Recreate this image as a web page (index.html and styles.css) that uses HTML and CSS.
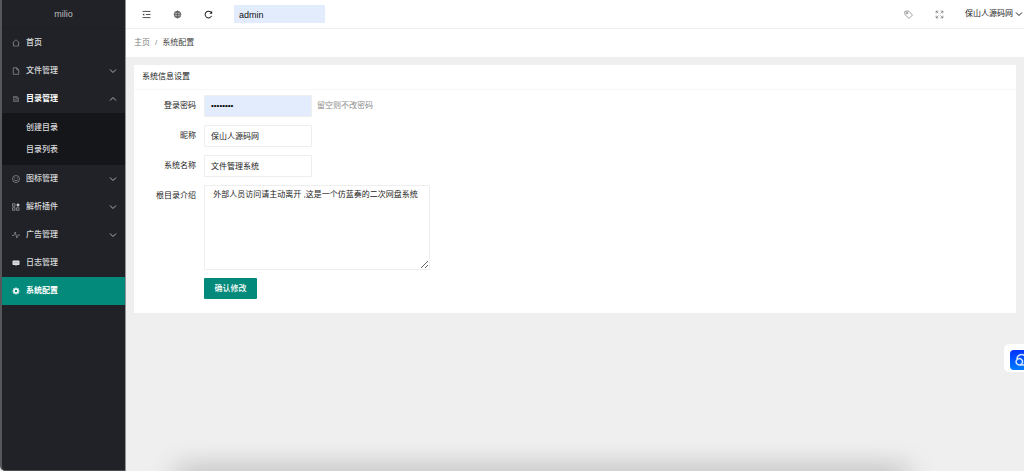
FILE: index.html
```html
<!DOCTYPE html>
<html lang="zh-CN">
<head>
<meta charset="utf-8">
<meta name="viewport" content="width=device-width, initial-scale=1">
<title>系统配置</title>
<link rel="stylesheet" href="styles.css">
</head>
<body>
<div class="app">
  <aside class="sidebar">
    <div class="brand">milio</div>
    <nav class="menu">
      <a class="item" href="#"><svg class="icon dim" viewBox="0 0 16 16"><path d="M1 8 8 1.500 15 8M3 7v7h10V7"/></svg><span>首页</span></a>
      <a class="item" href="#"><svg class="icon dim" viewBox="0 0 16 16"><path d="M2.500 1.500h7l4 4v9h-11zM9.500 1.500v4h4"/></svg><span>文件管理</span><svg class="chevron" viewBox="0 0 8 8"><path d="m1 2.500 3 3 3-3"/></svg></a>
      <a class="item open" href="#"><svg class="icon dark" viewBox="0 0 16 16"><path class="solid" d="M2 2h8l4 4v8H2z"/><path class="cut" d="M4 7h5M4 10h8"/></svg><span>目录管理</span><svg class="chevron" viewBox="0 0 8 8"><path d="m1 5.500 3-3 3 3"/></svg></a>
      <div class="submenu">
        <a class="subitem" href="#">创建目录</a>
        <a class="subitem" href="#">目录列表</a>
      </div>
      <a class="item" href="#"><svg class="icon dim" viewBox="0 0 16 16"><circle cx="8" cy="8" r="7"/><path d="M4.500 6h2M9.500 6h2M4.500 9.500q3.500 4 7 0"/></svg><span>图标管理</span><svg class="chevron" viewBox="0 0 8 8"><path d="m1 2.500 3 3 3-3"/></svg></a>
      <a class="item" href="#"><svg class="icon" viewBox="0 0 16 16"><path d="M1 1.500h5v5H1zM1 9.500h5v5H1zM9 9.500h5v5H9z"/><path class="solid bright" d="m12 0 1.500 2.500L16 4l-2.500 1.500L12 8l-1.500-2.500L8 4l2.500-1.500z"/></svg><span>解析插件</span><svg class="chevron" viewBox="0 0 8 8"><path d="m1 2.500 3 3 3-3"/></svg></a>
      <a class="item" href="#"><svg class="icon dim" viewBox="0 0 16 16"><path d="M0 9h3.500l3-7 3 12 2.500-6h4"/></svg><span>广告管理</span><svg class="chevron" viewBox="0 0 8 8"><path d="m1 2.500 3 3 3-3"/></svg></a>
      <a class="item" href="#"><svg class="icon bright" viewBox="0 0 16 16"><path class="solid" d="M2 3h12l1 1v7l-1 1H9.500L8 14l-1.500-2H2l-1-1V4z"/><path class="cut faint" d="M4 7.500h2M7 7.500h2M10 7.500h2"/></svg><span>日志管理</span></a>
      <a class="item active" href="#" aria-current="page"><svg class="icon" viewBox="0 0 16 16"><circle cx="8" cy="8" r="4" stroke-width="3"/><path stroke-width="2.500" d="M8 1v2M8 13v2M1 8h2M13 8h2M3 3l1.500 1.500M11.500 11.500 13 13M13 3l-1.500 1.500M4.500 11.500 3 13"/></svg><span>系统配置</span></a>
    </nav>
  </aside>
  <div class="main">
    <header class="topbar">
      <button class="tool" type="button" aria-label="折叠菜单"><svg class="glyph" viewBox="0 0 16 16"><path d="M1 2.500h14M7 8h8M1 13.500h14"/><path class="solid" d="M1 8l3-2v4z"/></svg></button>
      <button class="tool" type="button" aria-label="网站"><svg class="glyph globe" viewBox="0 0 16 16"><circle cx="8" cy="8" r="6"/><ellipse cx="8" cy="8" rx="3" ry="6"/><path d="M2 8h12M3 5h10M3 11h10M8 2v12"/></svg></button>
      <button class="tool" type="button" aria-label="刷新"><svg class="glyph refresh" viewBox="0 0 16 16"><path d="M13.500 10.500A6 6 0 1 1 12.500 4"/><path class="solid" d="M14.500 1.500v5h-5z"/></svg></button>
      <input class="search" type="text" value="admin" aria-label="搜索" autofocus>
      <div class="account">
        <button class="tool" type="button" aria-label="标签"><svg class="glyph thin" viewBox="0 0 16 16"><path d="M1.500 2.500 8 1.500l7 7.500-6 6-7.500-7z"/><circle cx="5.500" cy="5.500" r="1.500"/></svg></button>
        <button class="tool" type="button" aria-label="全屏"><svg class="glyph thin" viewBox="0 0 16 16"><path d="M2 6V2h4M2 2l4 4M10 2h4v4M14 2l-4 4M2 10v4h4M2 14l4-4M14 10v4h-4M14 14l-4-4"/></svg></button>
        <button class="user" type="button">保山人源码网<svg class="chevron" viewBox="0 0 8 8"><path d="m1 2.500 3 3 3-3"/></svg></button>
      </div>
    </header>
    <nav class="crumbs" aria-label="面包屑"><a href="#">主页</a><span class="slash">/</span><span class="here">系统配置</span></nav>
    <main class="content">
      <section class="card">
        <h1 class="title">系统信息设置</h1>
        <form class="form">
          <label for="password">登录密码</label>
          <div class="field"><input class="box filled" id="password" type="password" value="12345678"><span class="hint">留空则不改密码</span></div>
          <label for="nickname">昵称</label>
          <div class="field"><input class="box" id="nickname" type="text" value="保山人源码网"></div>
          <label for="sysname">系统名称</label>
          <div class="field"><input class="box" id="sysname" type="text" value="文件管理系统"></div>
          <label for="intro">根目录介绍</label>
          <div class="field"><textarea class="box area" id="intro"> 外部人员访问请主动离开 ,这是一个仿蓝奏的二次网盘系统</textarea></div>
          <button class="submit" type="button">确认修改</button>
        </form>
      </section>
    </main>
  </div>
</div>
<button class="floater" type="button" aria-label="云助手"><span class="cloud"><svg viewBox="0 0 20 20"><path d="M17 15H9a3.200 3.200 0 1 1 2.500-5.500c2 2 1 4.500-1.500 5.500M7 9a4.500 4.500 0 0 1 8.500-2"/></svg></span></button>
<div class="shade"></div>
</body>
</html>
```
FILE: styles.css
```css
* { box-sizing: border-box; }

body {
  margin: 0;
  overflow: hidden;
  background: #efefef;
  color: #222;
  font: 8px/12px "Liberation Sans", "Noto Sans CJK SC", sans-serif;
}

a { color: inherit; text-decoration: none; }
button, input, textarea { font: inherit; color: inherit; }
button { border: 0; padding: 0; background: none; cursor: pointer; }

svg {
  flex: none;
  fill: none;
  stroke: currentColor;
  stroke-width: 1.4;
}
.solid { fill: currentColor; stroke: none; }
.cut { stroke: #202227; }
.cut.faint { stroke: #77797c; }

.app { display: flex; min-height: 100vh; }

.sidebar {
  flex: 0 0 126px;
  border-left: 2px solid #55575a;
  border-right: 1px solid #939496;
  border-bottom: 1px solid #4b4c50;
  border-bottom-left-radius: 5px;
  background: #202227;
  color: #d8d9da;
}
.brand {
  height: 29px;
  border-bottom: 1px solid #1d1f23;
  color: #bcbdbe;
  font-size: 9px;
  line-height: 29px;
  text-align: center;
}
.item {
  display: flex;
  align-items: center;
  gap: 6px;
  height: 28px;
  padding: 0 8px 0 10px;
  font-weight: 500;
}
.icon { width: 8px; height: 8px; color: #a6a7a9; }
.icon.dim { color: #96989b; }
.icon.dark { color: #5b5d61; }
.bright, .icon.bright { color: #dcddde; }
.chevron { width: 8px; height: 8px; margin-left: auto; stroke-width: 1; }
.item .chevron { color: #b0b1b3; }
.item.open { color: #fff; font-weight: 700; }
.item.active { background: #038a7a; color: #fff; font-weight: 700; }
.item.active .icon { color: #fff; }
.submenu { padding: 4px 0; background: #15161a; }
.subitem { display: block; padding-left: 24px; line-height: 22px; font-weight: 500; }

.main { flex: 1; min-width: 0; }

.topbar {
  display: flex;
  align-items: center;
  height: 29px;
  padding: 0 1px 0 5px;
  border-bottom: 1px solid #ededed;
  background: #fff;
}
.tool { display: grid; place-items: center; width: 31px; height: 28px; }
.glyph { width: 9px; height: 9px; }
.globe { color: #555; }
.refresh { stroke-width: 1.8; }
.thin { color: #555; stroke-width: 1; }
.search {
  width: 91px;
  height: 18px;
  margin-left: 10px;
  padding: 1px 5px 0;
  border: 0;
  background: #e3ecfd;
  color: #111;
  font-size: 9px;
  outline: 0;
}
.account { display: flex; align-items: center; margin-left: auto; }
.user { display: flex; align-items: center; gap: 2px; margin-left: 10px; }

.crumbs {
  display: flex;
  align-items: center;
  gap: 5px;
  height: 28px;
  padding: 0 8px;
  background: #fff;
}
.crumbs a, .slash { color: #808080; }
.here { color: #444; }

.content { padding: 8px; }
.card { padding-bottom: 14px; background: #fff; }
.title {
  margin: 0;
  padding: 0 8px;
  border-bottom: 1px solid #f7f7f7;
  font-size: 8px;
  font-weight: 400;
  line-height: 24px;
}
.form {
  display: grid;
  grid-template-columns: 62px 1fr;
  gap: 8px;
  padding-top: 5px;
}
.form label { line-height: 22px; text-align: right; }
.field { display: flex; align-items: center; gap: 5px; }
.box {
  width: 108px;
  height: 22px;
  padding: 0 6px 2px;
  border: 1px solid #eee;
  border-radius: 1px;
  background: #fff;
  outline: 0;
}
.filled { background: #e3ecfd; color: #000; }
.area { width: 226px; height: 85px; padding: 3px 6px; resize: both; }
.hint { color: #8c8c8c; }
.submit {
  grid-column: 2;
  justify-self: start;
  width: 53px;
  height: 21px;
  border-radius: 1px;
  background: #038a7a;
  color: #fff;
  font-weight: 500;
}

.floater {
  position: fixed;
  top: 344px;
  right: 0;
  width: 20px;
  height: 28px;
  padding: 6px 0 2px 6px;
  overflow: hidden;
  border-radius: 5px 0 0 5px;
  background: #fff;
}
.cloud {
  display: block;
  width: 20px;
  height: 20px;
  border-radius: 4px;
  background: linear-gradient(#0332ff, #007cff);
  color: #d5e6ff;
}
.cloud svg { display: block; width: 20px; height: 20px; stroke-width: 1.5; }

.shade {
  position: fixed;
  right: 120px;
  bottom: -12px;
  left: 180px;
  height: 10px;
  box-shadow: 0 0 28px 4px rgba(0, 0, 0, .28);
  pointer-events: none;
}
```
